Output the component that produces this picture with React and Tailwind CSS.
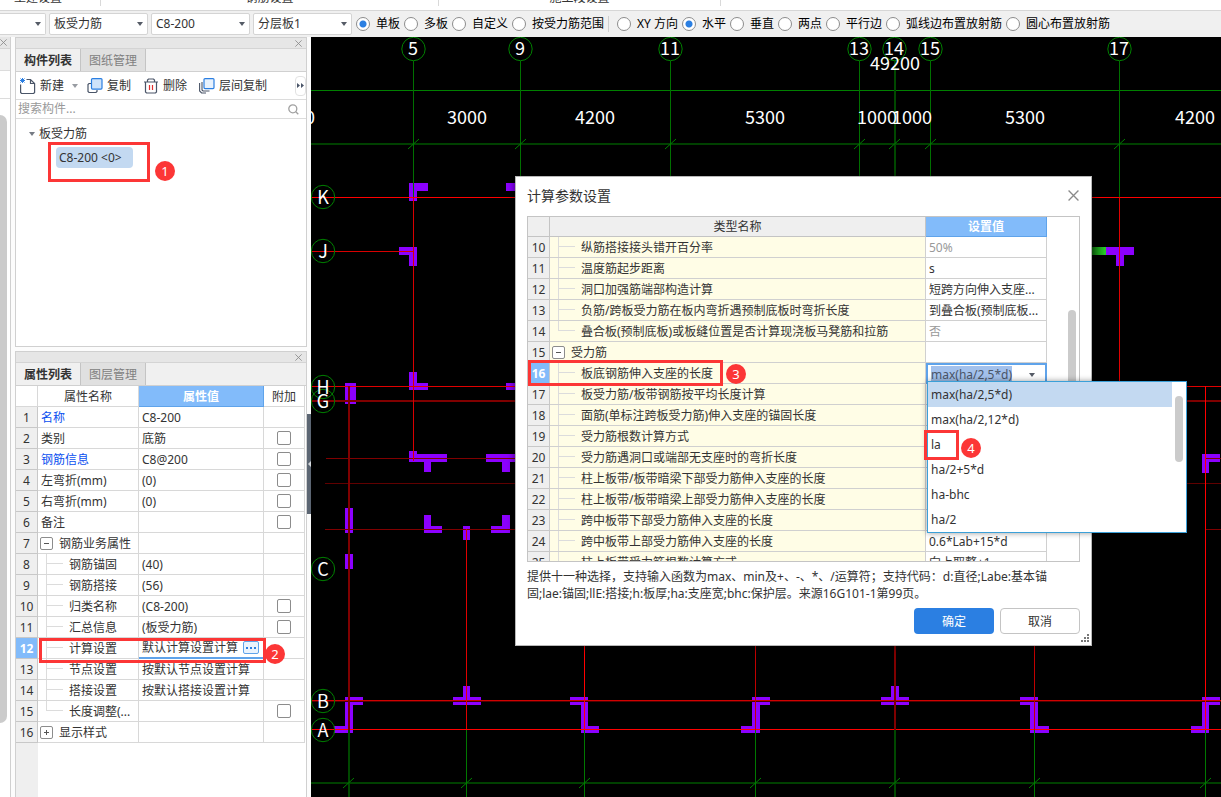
import { useState } from 'react';
import clsx from 'clsx';

const RIBBON_GROUPS = [
  { label: '土建设置', className: 'w-[101px] pr-6' },
  { label: '钢筋设置', className: 'w-[338px]' },
  { label: '施工段设置', className: 'w-[282px]' }
];

const SELECTS = ['板受力筋', 'C8-200', '分层板1'];

const SCOPE_MODES = ['单板', '多板', '自定义', '按受力筋范围'];
const LAYOUT_MODES = ['XY 方向', '水平', '垂直', '两点', '平行边', '弧线边布置放射筋', '圆心布置放射筋'];

const PROPERTIES = [
  { name: '名称', value: 'C8-200', link: true },
  { name: '类别', value: '底筋', check: true },
  { name: '钢筋信息', value: 'C8@200', link: true, check: true },
  { name: '左弯折(mm)', value: '(0)', check: true },
  { name: '右弯折(mm)', value: '(0)', check: true },
  { name: '备注', value: '', check: true },
  { name: '钢筋业务属性', value: '', group: 'open' },
  { name: '钢筋锚固', value: '(40)', child: true },
  { name: '钢筋搭接', value: '(56)', child: true },
  { name: '归类名称', value: '(C8-200)', child: true, check: true },
  { name: '汇总信息', value: '(板受力筋)', child: true, check: true },
  { name: '计算设置', value: '默认计算设置计算', child: true, active: true },
  { name: '节点设置', value: '按默认节点设置计算', child: true },
  { name: '搭接设置', value: '按默认搭接设置计算', child: true },
  { name: '长度调整(...', value: '', child: true, last: true, check: true },
  { name: '显示样式', value: '', group: 'closed' }
];

const PARAMS = [
  { no: 10, name: '纵筋搭接接头错开百分率', value: '50%', child: true, muted: true },
  { no: 11, name: '温度筋起步距离', value: 's', child: true },
  { no: 12, name: '洞口加强筋端部构造计算', value: '短跨方向伸入支座...', child: true },
  { no: 13, name: '负筋/跨板受力筋在板内弯折遇预制底板时弯折长度', value: '到叠合板(预制底板...', child: true },
  { no: 14, name: '叠合板(预制底板)或板缝位置是否计算现浇板马凳筋和拉筋', value: '否', child: true, last: true, muted: true },
  { no: 15, name: '受力筋', value: '', group: 'open' },
  { no: 16, name: '板底钢筋伸入支座的长度', value: 'max(ha/2,5*d)', child: true, active: true },
  { no: 17, name: '板受力筋/板带钢筋按平均长度计算', value: '', child: true },
  { no: 18, name: '面筋(单标注跨板受力筋)伸入支座的锚固长度', value: '', child: true },
  { no: 19, name: '受力筋根数计算方式', value: '', child: true },
  { no: 20, name: '受力筋遇洞口或端部无支座时的弯折长度', value: '', child: true },
  { no: 21, name: '柱上板带/板带暗梁下部受力筋伸入支座的长度', value: '', child: true },
  { no: 22, name: '柱上板带/板带暗梁上部受力筋伸入支座的长度', value: '', child: true },
  { no: 23, name: '跨中板带下部受力筋伸入支座的长度', value: '', child: true },
  { no: 24, name: '跨中板带上部受力筋伸入支座的长度', value: '0.6*Lab+15*d', child: true },
  { no: 25, name: '柱上板带受力筋根数计算方式', value: '向上取整+1', child: true }
];

const OPTIONS = ['max(ha/2,5*d)', 'max(ha/2,12*d)', 'la', 'ha/2+5*d', 'ha-bhc', 'ha/2'];

// 轴网数据
const TOP_AXES = [
  { x: 413, label: '5', end: 197 },
  { x: 520, label: '9', end: 197 },
  { x: 670, label: '11', end: 197 },
  { x: 859, label: '13', end: 197 },
  { x: 894, label: '14', end: 197, thick: true },
  { x: 930, label: '15', end: 197 },
  { x: 1119, label: '17', end: 197 }
];
const LEFT_AXES = [
  { y: 197, label: 'K' },
  { y: 251, label: 'J' },
  { y: 387, label: 'H' },
  { y: 401, label: 'G' },
  { y: 569, label: 'C' },
  { y: 701, label: 'B' },
  { y: 730, label: 'A' }
];
const BOTTOM_AXES = [
  { x: 348, thick: true },
  { x: 466 },
  { x: 584 },
  { x: 755 },
  { x: 894, thick: true },
  { x: 1034 },
  { x: 1205 }
];
const DIMENSIONS = [
  { x: 310, y: 124, text: '0' },
  { x: 467, y: 124, text: '3000' },
  { x: 595, y: 124, text: '4200' },
  { x: 765, y: 124, text: '5300' },
  { x: 877, y: 124, text: '1000' },
  { x: 912, y: 124, text: '1000' },
  { x: 1025, y: 124, text: '5300' },
  { x: 1195, y: 124, text: '4200' },
  { x: 895, y: 70, text: '49200' }
];
// 墙柱: [x, y, width, height]
const WALLS = [
  [409, 183, 19, 8], [409, 183, 8, 18], [506, 183, 12, 8],
  [399, 247, 18, 8], [409, 247, 8, 19],
  [409, 372, 8, 18], [409, 383, 19, 7], [506, 383, 12, 7],
  [345, 383, 11, 21],
  [409, 451, 8, 11], [409, 454, 38, 8], [424, 454, 7, 18],
  [486, 454, 32, 8], [502, 454, 8, 18],
  [345, 508, 8, 25], [424, 515, 7, 18], [424, 526, 18, 7],
  [502, 515, 8, 18], [491, 526, 19, 7], [463, 526, 7, 14],
  [345, 554, 8, 15],
  [345, 697, 18, 8], [345, 697, 8, 36], [334, 726, 19, 7],
  [453, 697, 28, 8], [463, 686, 7, 19],
  [570, 697, 18, 8], [581, 697, 7, 36], [581, 726, 18, 7],
  [752, 697, 18, 8], [752, 697, 8, 36], [741, 726, 19, 7],
  [881, 697, 28, 8], [891, 686, 8, 19],
  [1020, 697, 18, 8], [1030, 697, 8, 36], [1030, 726, 19, 7],
  [1202, 697, 18, 8], [1202, 697, 7, 36], [1191, 726, 18, 7],
  [1106, 247, 28, 8], [1116, 247, 8, 19],
  [1202, 454, 18, 8], [1202, 454, 7, 19]
];
// 梁线: [x, y, width, height, color]
const BEAMS = [
  [311, 197, 910, 1, '#ff0000'], [311, 251, 102, 1, '#d80000'],
  [311, 386, 910, 1, '#e00000'], [311, 400, 910, 2, '#800000'],
  [326, 458, 189, 1, '#800000'], [325, 483, 896, 1, '#600000'], [325, 529, 190, 1, '#800000'],
  [1205, 458, 16, 1, '#800000'], [1205, 529, 16, 1, '#800000'],
  [311, 700, 910, 1, '#d00000'], [311, 701, 910, 1, '#500000'], [311, 729, 910, 1, '#ff0000'],
  [413, 197, 1, 264, '#d80000'], [348, 386, 2, 344, '#800000'], [466, 529, 1, 200, '#e00000'],
  [584, 640, 1, 90, '#ff0000'], [755, 640, 1, 90, '#c00000'], [894, 640, 2, 90, '#800000'],
  [1034, 640, 1, 90, '#c00000'], [1205, 386, 1, 344, '#ff0000'], [1119, 197, 1, 189, '#e00000']
];

function CloseIcon({ size = 8 }) {
  return (
    <svg width={size} height={size} viewBox="0 0 10 10" fill="none" stroke="#8a8a8a" strokeWidth="1.2">
      <path d="M0.5 0.5 9.5 9.5M9.5 0.5 0.5 9.5" />
    </svg>
  );
}

function Caret({ className }) {
  return (
    <svg className={className} width="6" height="4" viewBox="0 0 6 4" fill="#555b66">
      <path d="M0 0h6L3 4z" />
    </svg>
  );
}

// 步骤标记
function Mark({ n, className }) {
  return (
    <span className={clsx('absolute z-20 flex size-5 items-center justify-center rounded-full bg-[#fc3636] text-[13px] leading-5 text-white', className)}>
      {n}
    </span>
  );
}

function Frame({ className }) {
  return <span className={clsx('pointer-events-none absolute z-20 border-3 border-[#fc3636]', className)} />;
}

function ToolSelect({ value }) {
  return (
    <div className="relative w-[99px]">
      <select aria-label={value} className="h-[22px] w-full appearance-none rounded-xs border border-[#d4d4d4] bg-white pl-1 text-xs leading-5 text-[#333] outline-none">
        <option>{value}</option>
      </select>
      <Caret className="pointer-events-none absolute top-[9px] right-[5px]" />
    </div>
  );
}

function RadioGroup({ name, items, value, onChange }) {
  return items.map((item) => (
    <label key={item} className="mr-1 flex shrink-0 items-center gap-[6px] whitespace-nowrap text-black">
      <input
        type="radio"
        name={name}
        checked={value === item}
        onChange={() => onChange(item)}
        className="size-[14px] shrink-0 appearance-none rounded-full border border-[#8c8c8c] bg-white checked:bg-[radial-gradient(circle,#2b7fe2_0_3px,white_4px)]"
      />
      {item}
    </label>
  ));
}

function Toolbar() {
  const [scope, setScope] = useState('单板');
  const [layout, setLayout] = useState('水平');

  return (
    <header className="shrink-0">
      <div className="flex h-[10px] items-end overflow-hidden bg-white pb-1">
        {RIBBON_GROUPS.map((g) => (
          <div key={g.label} className={clsx('shrink-0 border-r border-[#d9d9d9] text-center leading-4', g.className)}>{g.label}</div>
        ))}
      </div>
      <div className="flex h-[27px] items-center border-t border-[#d6d6d6] bg-[#f0f0f0]">
        <div className="flex shrink-0 gap-[3px]">
          <div className="relative w-[46px]">
            <select aria-label="楼层" className="h-[22px] w-full appearance-none rounded-r-xs border border-l-0 border-[#d4d4d4] bg-white" />
            <Caret className="pointer-events-none absolute top-[9px] right-[5px]" />
          </div>
          {SELECTS.map((s) => <ToolSelect key={s} value={s} />)}
        </div>
        <div className="ml-1 flex items-center">
          <RadioGroup name="scope" items={SCOPE_MODES} value={scope} onChange={setScope} />
          <span className="mr-2 h-4 w-px bg-[#cfcfcf]" />
          <RadioGroup name="layout" items={LAYOUT_MODES} value={layout} onChange={setLayout} />
        </div>
      </div>
    </header>
  );
}

function PanelHead({ tabs }) {
  return (
    <>
      <div className="flex h-[11px] shrink-0 items-center justify-end border-b border-[#d4d4d4] bg-[#e6e6e6] pr-1">
        <button type="button" aria-label="关闭"><CloseIcon size={7} /></button>
      </div>
      <div className="flex h-[23px] shrink-0 border-b border-[#d0d0d0] bg-[#f0f0f0]" role="tablist">
        {tabs.map((tab, i) => (
          <button
            key={tab}
            type="button"
            role="tab"
            aria-selected={i === 0}
            className={clsx(
              'w-[65px] border-r border-[#c4c4c4] pt-px leading-[21px]',
              i === 0 ? 'font-bold text-[#333]' : 'bg-[#e0e0e0] text-[#808080]'
            )}
          >
            {tab}
          </button>
        ))}
      </div>
    </>
  );
}

function NewIcon() {
  return (
    <svg width="16" height="16" viewBox="0 0 16 16" fill="none">
      <path d="M0.600 6.500v8l1 1h12l1-1V5.500L10.500 1.500H6.500M10.500 1.500v4h4" stroke="#4a5568" strokeWidth="1.200" />
      <path d="M0.500 0.500 4.500 4.500M4.500 0.500 0.500 4.500M2.500 0v5M0 2.500h5" stroke="#2b7fe2" />
    </svg>
  );
}

function CopyIcon() {
  return (
    <svg width="16" height="16" viewBox="0 0 16 16" fill="none">
      <path d="M4 5.500H2L1 6.500v7l1 1h7l1-1V12" stroke="#4a5568" strokeWidth="1.200" />
      <rect x="4.500" y="0.600" width="10.500" height="10.500" rx="1" fill="#cfe3fa" stroke="#2b7fe2" strokeWidth="1.200" />
    </svg>
  );
}

function TrashIcon() {
  return (
    <svg width="14" height="16" viewBox="0 0 14 16" fill="none">
      <path d="M0 4h14M3.500 4V2L4.500 1h5L10.500 2v2M1.500 4v10l1 1h9l1-1V4" stroke="#4a5568" strokeWidth="1.200" />
      <path d="M5.500 7v5M8.500 7v5" stroke="#e03030" strokeWidth="1.200" />
    </svg>
  );
}

function LayerCopyIcon() {
  return (
    <svg width="16" height="16" viewBox="0 0 16 16" fill="none">
      <path d="M0.600 5v8l2 2H7M3 4v8l1 1h6.500" stroke="#4a5568" strokeWidth="1.100" />
      <rect x="5" y="0.600" width="10" height="10" rx="1" fill="#e8f2fd" stroke="#2b7fe2" strokeWidth="1.200" />
    </svg>
  );
}

function ComponentPanel() {
  return (
    <section className="relative flex h-[310px] shrink-0 flex-col border border-[#d0d0d0] bg-white">
      <PanelHead tabs={['构件列表', '图纸管理']} />
      <div className="flex h-7 shrink-0 items-center border-b border-[#dcdcdc] pl-1">
        <button type="button" className="mr-[9px] flex items-center gap-1 whitespace-nowrap"><NewIcon />新建<Caret className="ml-1 opacity-60" /></button>
        <button type="button" className="mr-[13px] flex items-center gap-1 whitespace-nowrap"><CopyIcon />复制</button>
        <button type="button" className="mr-3 flex items-center gap-[5px] whitespace-nowrap"><TrashIcon />删除</button>
        <button type="button" className="flex items-center gap-1 whitespace-nowrap"><LayerCopyIcon />层间复制</button>
        <button type="button" aria-label="更多" className="ml-auto flex h-5 w-[11px] items-center justify-center rounded-sm border border-[#e2e2e2]">
          <svg width="7" height="5" viewBox="0 0 7 5" fill="#4a5568" className="shrink-0"><path d="M0 0 3 2.500 0 5zM4 0 7 2.500 4 5z" /></svg>
        </button>
      </div>
      <div className="flex h-[19px] shrink-0 items-center border-b border-[#dcdcdc] pr-[7px] pl-[2px]">
        <input aria-label="搜索构件" placeholder="搜索构件..." className="min-w-0 flex-1 text-xs leading-4 outline-none placeholder:text-[#999]" />
        <svg width="11" height="11" viewBox="0 0 11 11" fill="none" stroke="#a0a0a0" strokeWidth="1.300"><circle cx="4.800" cy="4.800" r="4" /><path d="M7.800 7.800 10.300 10.300" /></svg>
      </div>
      <div className="pt-[5px] pl-[13px]">
        <div className="flex h-5 items-center gap-1"><Caret className="opacity-80" />板受力筋</div>
        <div className="relative mt-[3px] ml-[27px] w-fit">
          <button type="button" className="block h-[21px] w-[77px] rounded-sm bg-[#c3d9f1] pl-[3px] text-left leading-5 whitespace-nowrap">C8-200 &lt;0&gt;</button>
          <Frame className="-top-[5px] -left-2 h-10 w-[102px]" />
          <Mark n={1} className="top-[14px] left-[99px]" />
        </div>
      </div>
    </section>
  );
}

// 树形名称单元格
function TreeName({ row }) {
  if (row.group) {
    return (
      <div className="flex h-5 items-center gap-[6px] pl-[2px]">
        <button type="button" aria-label={row.name} className="flex size-[13px] shrink-0 items-center justify-center rounded-xs border border-[#8c8c8c] bg-white">
          <svg width="7" height="7" viewBox="0 0 7 7" stroke="#555">
            <path d={row.group === 'open' ? 'M1 3.500h5' : 'M1 3.500h5M3.500 1v5'} />
          </svg>
        </button>
        <span className="pt-px">{row.name}</span>
      </div>
    );
  }
  if (row.child) {
    return (
      <div className="flex h-5 items-center pl-2 whitespace-nowrap">
        <span className="mr-[6px] h-5 w-[17px] shrink-0">
          <span className="block h-[10px] border-b border-l border-[#dcdcdc]" />
          <span className={clsx('block h-[10px]', !row.last && 'border-l border-[#dcdcdc]')} />
        </span>
        <span className="pt-px">{row.name}</span>
      </div>
    );
  }
  return <div className={clsx('h-5 pt-px pl-[3px]', row.link && 'text-[#0a50f0]')}>{row.name}</div>;
}

function PropertyPanel() {
  return (
    <section className="relative flex min-h-0 flex-1 flex-col overflow-hidden border border-b-0 border-[#d0d0d0] bg-white">
      <PanelHead tabs={['属性列表', '图层管理']} />
      <div className="relative shrink-0">
        <table className="w-[289px] table-fixed border-separate border-spacing-0 leading-[19px]">
          <thead>
            <tr>
              <th className="h-[21px] w-[22px] border-r border-b border-[#d8d8d8] p-0" />
              <th className="w-[101px] border-r border-b border-[#d8d8d8] p-0 pt-px font-normal">属性名称</th>
              <th className="w-[125px] border-r border-b border-[#5fa3ea] bg-[#82bbfa] p-0 pt-px font-bold text-white">属性值</th>
              <th className="w-[41px] border-r border-b border-[#d8d8d8] p-0 pt-px font-normal">附加</th>
            </tr>
          </thead>
          <tbody>
            {PROPERTIES.map((row, i) => (
              <tr key={row.name}>
                <td className={clsx('h-[21px] border-r border-b border-[#c8c8c8] p-0 pt-px text-center', row.active ? 'bg-[#82bbfa] font-bold text-white' : 'bg-[#efefef]')}>{i + 1}</td>
                <td className="border-r border-b border-[#d8d8d8] p-0"><TreeName row={row} /></td>
                <td className={clsx('border-r border-b p-0', row.active ? 'border-b-2 border-[#5fa3ea]' : 'border-[#d8d8d8] pt-px')}>
                  <div className="flex h-[19px] items-center pl-[3px] whitespace-nowrap">
                    {row.value}
                    {row.active && (
                      <button type="button" aria-label="设置" className="ml-auto mr-1 flex h-[13px] w-4 items-center justify-center rounded-xs border border-[#5fa3ea] bg-[#eaf3fd]">
                        <svg width="10" height="2" viewBox="0 0 10 2" fill="#2b7fe2"><path d="M0 0h2v2H0zM4 0h2v2H4zM8 0h2v2H8z" /></svg>
                      </button>
                    )}
                  </div>
                </td>
                <td className="border-r border-b border-[#d8d8d8] p-0">
                  {row.check && <input type="checkbox" aria-label={row.name} className="mx-auto block size-[14px] appearance-none rounded-xs border border-[#8c8c8c] bg-white" />}
                </td>
              </tr>
            ))}
          </tbody>
        </table>
        <Frame className="top-[252px] left-[23px] h-[25px] w-[227px]" />
        <Mark n={2} className="top-[258px] left-[249px]" />
      </div>
      <div className="w-[22px] flex-1 bg-[#efefef]" />
    </section>
  );
}

function Sidebar() {
  return (
    <aside className="flex w-[311px] shrink-0 bg-[#fcfcfc]">
      <div className="flex w-[11px] shrink-0 flex-col border-r border-[#d0d0d0] bg-white">
        <div className="flex h-3 items-center overflow-hidden border-b border-[#d4d4d4] bg-[#e6e6e6]"><CloseIcon size={7} /></div>
        <div className="h-[22px] border-b border-[#dcdcdc] bg-[#f0f0f0]" />
        <div className="h-7 border-b border-[#dcdcdc]" />
        <div className="mt-4 mb-[74px] w-[7px] flex-1 rounded-r-full bg-[#cbcbcb]" />
      </div>
      <div className="ml-1 flex w-[292px] min-h-0 flex-col gap-1">
        <ComponentPanel />
        <PropertyPanel />
      </div>
      <button type="button" aria-label="收起" className="mt-[377px] flex h-[100px] w-1 items-center justify-center bg-[#5c6673]">
        <svg width="3" height="6" viewBox="0 0 3 6" fill="#d5d9de"><path d="M3 0v6L0 3z" /></svg>
      </button>
    </aside>
  );
}

function Tick({ x, y }) {
  return <path d={`M${x - 5} ${y + 5}L${x + 6} ${y - 5}`} stroke="#008000" />;
}

function Drawing() {
  return (
    <svg className="block size-full" viewBox="311 37 910 760" preserveAspectRatio="xMinYMin slice" fontFamily='"Noto Sans CJK SC", sans-serif' fontSize="18" textAnchor="middle">
      <defs>
        <linearGradient id="beam" x1="0" x2="1">
          <stop offset="0" stopColor="#0a5c0a" />
          <stop offset="1" stopColor="#2ad02a" />
        </linearGradient>
      </defs>
      <g shapeRendering="crispEdges">
        <rect x="311" y="90" width="910" height="1" fill="#008000" />
        <rect x="311" y="143" width="910" height="2" fill="#004000" />
        <rect x="311" y="782" width="910" height="2" fill="#004000" />
        {WALLS.map(([x, y, w, h]) => (
          <rect key={`${x}-${y}-${w}-${h}`} x={x} y={y} width={w} height={h} fill="#8c00ff" />
        ))}
        <rect x="1090" y="247" width="16" height="8" fill="url(#beam)" />
        {TOP_AXES.map((a) => (
          <rect key={a.label} x={a.x} y="61" width={a.thick ? 2 : 1} height={a.end - 61} fill={a.thick ? '#004800' : '#007000'} />
        ))}
        {BOTTOM_AXES.map((a) => (
          <rect key={a.x} x={a.x} y="729" width={a.thick ? 2 : 1} height="68" fill={a.thick ? '#004800' : '#007800'} />
        ))}
        {BEAMS.map(([x, y, w, h, color]) => (
          <rect key={`${x}-${y}-${w}`} x={x} y={y} width={w} height={h} fill={color} />
        ))}
      </g>
      {TOP_AXES.map((a) => <Tick key={a.x} x={a.x} y={144} />)}
      {BOTTOM_AXES.map((a) => <Tick key={a.x} x={a.x} y={783} />)}
      <g fill="none" stroke="#008000">
        {TOP_AXES.map((a) => <circle key={a.x} cx={a.x + 0.5} cy="49" r="11.700" />)}
        {LEFT_AXES.map((a) => <circle key={a.y} cx="323" cy={a.y} r="11.700" />)}
      </g>
      <g fill="#fff">
        {TOP_AXES.map((a) => <text key={a.x} x={a.x} y="55">{a.label}</text>)}
        {LEFT_AXES.map((a) => <text key={a.y} x="323" y={a.y + 7}>{a.label}</text>)}
        {DIMENSIONS.map((d) => <text key={`${d.x}-${d.y}`} x={d.x} y={d.y}>{d.text}</text>)}
      </g>
    </svg>
  );
}

function ParamDialog() {
  const [value, setValue] = useState(OPTIONS[0]);

  return (
    <div role="dialog" aria-label="计算参数设置" className="absolute top-[139px] left-[204px] w-[577px] border border-[#b8b8b8] bg-white px-[11px] shadow-[0_0_8px_rgba(0,0,0,0.6)]">
      <div className="flex h-[39px] items-center justify-between pr-[1px] pb-[2px]">
        <h2 className="text-sm leading-5">计算参数设置</h2>
        <button type="button" aria-label="关闭"><CloseIcon size={11} /></button>
      </div>
      <div className="flex h-[346px] overflow-hidden border border-[#c4c4c4]">
        <table className="w-[519px] table-fixed border-separate border-spacing-0 self-start leading-[19px]">
          <thead>
            <tr className="leading-[18px]">
              <th className="h-5 w-[22px] border-r border-b border-[#c4c4c4] bg-[#efefef] p-0" />
              <th className="w-[376px] border-r border-b border-[#c4c4c4] bg-[#efefef] p-0 pt-px font-normal">类型名称</th>
              <th className="w-[121px] border-r border-b border-[#5fa3ea] bg-[#82bbfa] p-0 pt-px font-bold text-white">设置值</th>
            </tr>
          </thead>
          <tbody>
            {PARAMS.map((row) => (
              <tr key={row.no}>
                <td className={clsx('h-[21px] border-r border-b border-[#c8c8c8] p-0 pt-px text-center', row.active ? 'bg-[#82bbfa] font-bold text-white' : 'bg-[#efefef]')}>{row.no}</td>
                <td className="border-r border-b border-[#d0d0d0] bg-[#fffde6] p-0"><TreeName row={row} /></td>
                {row.active ? (
                  <td className="border-2 border-b-0 border-[#5fa3ea] p-0">
                    <button type="button" aria-haspopup="listbox" aria-label={row.name} className="flex h-[19px] w-full items-center justify-between pr-[10px] pl-[3px] leading-[18px]">
                      <span className="bg-[#a3c1ec] text-[#4a5568]">{value}</span>
                      <Caret />
                    </button>
                  </td>
                ) : (
                  <td className={clsx('border-r border-b border-[#d0d0d0] p-0 pt-px pl-[3px] whitespace-nowrap', row.muted && 'text-[#999]')}>{row.value}</td>
                )}
              </tr>
            ))}
          </tbody>
        </table>
        <div className="mt-[93px] mr-[3px] ml-auto h-[200px] w-2 rounded-full bg-[#cbcbcb]" />
      </div>
      <p className="mt-[6px] leading-[17px]">
        提供十一种选择，支持输入函数为max、min及+、-、*、/运算符；支持代码：d:直径;Labe:基本锚固;lae:锚固;llE:搭接;h:板厚;ha:支座宽;bhc:保护层。来源16G101-1第99页。
      </p>
      <div className="mt-[6px] mb-[11px] flex justify-end gap-[6px]">
        <button type="button" className="h-[26px] w-20 rounded-sm bg-[#2b7fe2] pt-px text-white">确定</button>
        <button type="button" className="h-[26px] w-20 rounded-sm border border-[#c4c4c4] bg-white pt-px">取消</button>
      </div>
      <svg className="absolute right-[2px] bottom-[2px]" width="9" height="9" viewBox="0 0 9 9" fill="#777">
        <path d="M7 0h2v2H7zM4 3h2v2H4zM7 3h2v2H7zM1 6h2v2H1zM4 6h2v2H4zM7 6h2v2H7z" />
      </svg>
      <div className="absolute top-[204px] left-[411px] z-10 flex w-[260px] border border-[#3ba0d8] bg-white shadow-[0_0_6px_rgba(0,0,0,0.4)]">
        <ul role="listbox" aria-label="设置值" className="flex-1">
          {OPTIONS.map((option) => (
            <li
              key={option}
              role="option"
              aria-selected={option === value}
              onClick={() => setValue(option)}
              className={clsx('h-[25px] pl-[3px] leading-[25px]', option === value && 'bg-[#c3d9f1]')}
            >
              {option}
            </li>
          ))}
        </ul>
        <div className="mt-[14px] mr-[3px] ml-[3px] h-[66px] w-2 rounded-full bg-[#cbcbcb]" />
      </div>
      <Frame className="top-[183px] left-3 h-[26px] w-[195px]" />
      <Mark n={3} className="top-[187px] left-[210px]" />
      <Frame className="top-[253px] left-[408px] h-[30px] w-[35px]" />
      <Mark n={4} className="top-[261px] left-[445px]" />
    </div>
  );
}

function App() {
  return (
    <div className="flex h-screen flex-col overflow-hidden bg-white font-['Noto_Sans','Noto_Sans_CJK_SC',sans-serif] text-xs text-[#333]">
      <Toolbar />
      <div className="flex min-h-0 flex-1">
        <Sidebar />
        <main className="relative min-w-0 flex-1 bg-black">
          <Drawing />
          <ParamDialog />
        </main>
      </div>
    </div>
  );
}

export default App;
